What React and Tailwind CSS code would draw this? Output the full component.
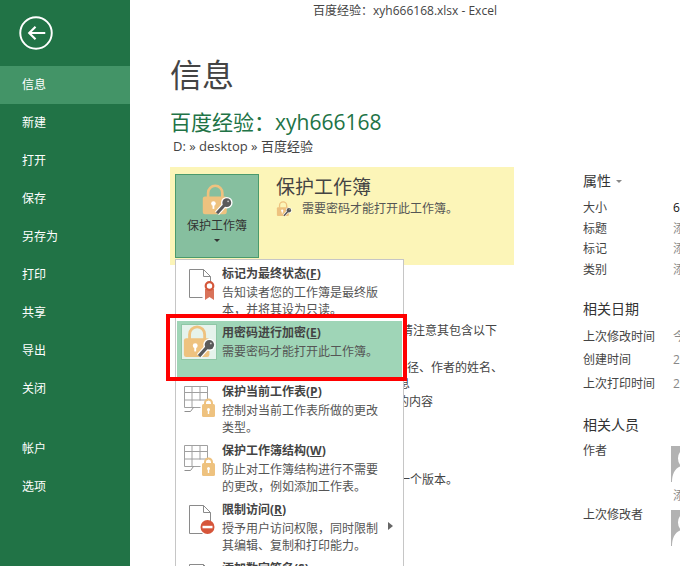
const fontStack = "font-['Open_Sans','Noto_Sans_CJK_SC',sans-serif]"

const navTop = ['信息', '新建', '打开', '保存', '另存为', '打印', '共享', '导出', '关闭']
const navBottom = ['帐户', '选项']

const LockKey = ({ className }) => (
  <svg viewBox="0 0 36 36" className={className}>
    <path d="M8 15V10a8 8 0 0 1 16 0v5" fill="none" stroke="#eec27f" strokeWidth="3" />
    <rect x="2" y="14" width="27" height="20" rx="2.5" fill="#eec27f" />
    <circle cx="14" cy="22" r="2.6" fill="#fff" />
    <rect x="13" y="22" width="2" height="6" fill="#fff" />
    <path d="M18 33l9-10" fill="none" stroke="#fff" strokeWidth="6" />
    <circle cx="29" cy="21" r="6.500" fill="#fff" />
    <path d="M18 33l9-10" fill="none" stroke="#5a5a5a" strokeWidth="3.500" />
    <circle cx="29" cy="21" r="5" fill="#5a5a5a" />
    <circle cx="30.500" cy="19.500" r="1" fill="#ccc" />
  </svg>
)

const Doc = ({ children }) => (
  <svg viewBox="0 0 36 36" className="w-9 h-9">
    <path d="M5.500 1.500h14l7 7v11M26.500 8.500h-7v-7M5.500 1.500v28h13" fill="none" stroke="#8a8a8a" />
    {children}
  </svg>
)

const Ribbon = () => (
  <Doc>
    <path d="M21 21h9v11l-4.500-3-4.500 3z" fill="#d9735a" />
    <circle cx="25.500" cy="18" r="3.800" fill="#fff" stroke="#d4573a" strokeWidth="2.200" />
  </Doc>
)

const Blocked = () => (
  <Doc>
    <circle cx="23.500" cy="23" r="7" fill="#d6553a" />
    <rect x="18.500" y="21.800" width="10" height="2.500" fill="#fff" />
  </Doc>
)

const SheetLock = () => (
  <svg viewBox="0 0 36 36" className="w-9 h-9">
    <path d="M.5 .5h23v14M.5 .5v21h16M.5 6.500h23M.5 14h23M.5 21.500M8 .5v21M16 .5v14" fill="none" stroke="#a0a0a0" />
    <path d="M.5 25.500h6l3-4" fill="none" stroke="#8f8f8f" />
    <path d="M21 19v-2a3.500 3.500 0 0 1 7 0v2" fill="none" stroke="#eec27f" strokeWidth="2" />
    <rect x="18" y="18" width="13" height="13" rx="1.500" fill="#eec27f" />
    <circle cx="24.500" cy="23.500" r="1.500" fill="#fff" />
    <rect x="23.800" y="24" width="1.400" height="4" fill="#fff" />
  </svg>
)

const Avatar = () => (
  <svg viewBox="0 0 36 36" className="w-9 h-9 shrink-0">
    <rect width="36" height="36" fill="#b2b2b2" />
    <path d="M1 36c0-8 3-14 9-16a11 11 0 1 1 16 0c6 2 9 8 9 16z" fill="#fff" />
  </svg>
)

const MenuItem = ({ icon, title, hot, lines, active, arrow }) => (
  <div className={`relative flex h-[59px] shrink-0 pl-[7px] pt-[6px] ${active ? 'bg-[#9fd5b7]' : ''}`}>
    <div className="w-[38px] shrink-0">{icon}</div>
    <div className="-mt-[3px] text-[12px] leading-[17px] text-[#555] whitespace-nowrap">
      <div className="font-bold text-[#444] mb-[2px]">{title}(<span className="underline">{hot}</span>)</div>
      {lines.map((l) => <div key={l}>{l}</div>)}
    </div>
    {arrow && <div className="absolute right-[9px] top-[24px] w-0 h-0 border-y-[4px] border-y-transparent border-l-[5px] border-l-[#666]" />}
  </div>
)

const Prop = ({ label, value, dark, className = '' }) => (
  <div className={`flex text-[12px] leading-[17px] whitespace-nowrap ${className}`}>
    <div className="w-[90px] shrink-0 text-[#444]">{label}</div>
    <div className={dark ? 'text-[#111]' : 'text-[#888]'}>{value}</div>
  </div>
)

export default function App() {
  return (
    <div className={`flex w-[680px] h-[566px] overflow-hidden bg-white ${fontStack}`}>
      <aside className="w-[130px] shrink-0 bg-[#217346] text-white text-[12px]">
        <div className="h-[66px] pl-[19px] pt-[16px]">
          <svg viewBox="0 0 36 36" className="w-[35px] h-[35px]" fill="none" stroke="#fff">
            <circle cx="17.500" cy="17.500" r="16.200" strokeWidth="2" />
            <path d="M27 17.500H11M17 11l-6.500 6.500L17 24" strokeWidth="2.200" />
          </svg>
        </div>
        {navTop.map((n, i) => (
          <div key={n} className={`h-[38px] pl-[22px] flex items-center ${i === 0 ? 'bg-[#439467]' : ''}`}>{n}</div>
        ))}
        <div className="h-[22px]" />
        {navBottom.map((n) => (
          <div key={n} className="h-[38px] pl-[22px] flex items-center">{n}</div>
        ))}
      </aside>

      <main className="flex-1 min-w-0">
        <div className="h-[22px] text-center text-[12px] leading-[22px] text-[#444] whitespace-nowrap">百度经验：xyh666168.xlsx - Excel</div>
        <div className="flex">
          <div className="relative w-[344px] ml-[40px] shrink-0">
            <h1 className="mt-[31px] text-[32px] leading-[44px] text-[#444]">信息</h1>
            <div className="mt-[10px] text-[21px] leading-[30px] text-[#217346] whitespace-nowrap">百度经验：xyh666168</div>
            <div className="ml-[3px] text-[13px] leading-[18px] text-[#444] whitespace-nowrap">D: » desktop » 百度经验</div>

            <div className="flex mt-[12px] h-[98px] bg-[#fcf5b8] pl-[5px] pt-[7px]">
              <div className="flex flex-col items-center w-[84px] h-[84px] bg-[#86bf9f] border border-[#4a9a6c] pt-[9px]">
                <LockKey className="w-[32px] h-[32px]" />
                <div className="mt-[2px] text-[12px] leading-[16px] text-[#333] whitespace-nowrap">保护工作簿</div>
                <div className="mt-[5px] w-0 h-0 border-x-[3px] border-x-transparent border-t-[3px] border-t-[#333]" />
              </div>
              <div className="ml-[17px]">
                <div className="text-[19px] leading-[26px] text-[#444] whitespace-nowrap">保护工作簿</div>
                <div className="flex items-center text-[12px] leading-[16px] text-[#555] whitespace-nowrap mt-[1px]">
                  <LockKey className="w-[16px] h-[16px]" />
                  <span className="ml-[10px]">需要密码才能打开此工作簿。</span>
                </div>
              </div>
            </div>

            <div className="pl-[123px] text-[12px] leading-[17px] text-[#444] whitespace-nowrap">
              <div className="mt-[57px]">在发布此文件之前，请注意其包含以下</div>
              <div className="mt-[20px] ml-[6px]">文档属性、打印机路径、作者的姓名、</div>
              <div className="-mt-[1px] ml-[9px]">相关日期和其他信息</div>
              <div className="mt-px ml-[8px]">残障人士难以阅读的内容</div>
              <div className="mt-[61px] ml-[9px]">此工作簿没有任何一个版本。</div>
            </div>

            <div className="absolute left-[5px] top-[237px] w-[229px] h-[340px] bg-white border-x border-t border-[#c6c6c6] px-px pt-[2px] flex flex-col">
              <MenuItem icon={<Ribbon />} title="标记为最终状态" hot="F" lines={['告知读者您的工作簿是最终版', '本，并将其设为只读。']} />
              <MenuItem active icon={
                <div className="w-[36px] h-[36px] -mt-[3px] -ml-[3px] bg-[#e6f3ec] border border-[#8fc7a6] flex items-center justify-center">
                  <LockKey className="w-[34px] h-[34px]" />
                </div>
              } title="用密码进行加密" hot="E" lines={['需要密码才能打开此工作簿。']} />
              <MenuItem icon={<SheetLock />} title="保护当前工作表" hot="P" lines={['控制对当前工作表所做的更改', '类型。']} />
              <MenuItem icon={<SheetLock />} title="保护工作簿结构" hot="W" lines={['防止对工作簿结构进行不需要', '的更改，例如添加工作表。']} />
              <MenuItem arrow icon={<Blocked />} title="限制访问" hot="R" lines={['授予用户访问权限，同时限制', '其编辑、复制和打印能力。']} />
              <MenuItem icon={<Doc />} title="添加数字签名" hot="S" lines={[]} />
            </div>

            <div className="absolute left-[-4px] top-[292px] w-[241px] h-[67px] border-4 border-[#f00] pointer-events-none" />
          </div>

          <div className="ml-[69px] shrink-0 w-[200px]">
            <div className="mt-[150px] flex items-center text-[14px] leading-[18px] text-[#333]">
              属性
              <span className="ml-[5px] w-0 h-0 border-x-[3px] border-x-transparent border-t-[3px] border-t-[#888]" />
            </div>
            <Prop className="mt-[9px]" label="大小" value="6.75KB" dark />
            <Prop className="mt-[4px]" label="标题" value="添加标题" />
            <Prop className="mt-[3px]" label="标记" value="添加标记" />
            <Prop className="mt-[4px]" label="类别" value="添加类别" />
            <div className="mt-[21px] text-[14px] leading-[20px] text-[#333]">相关日期</div>
            <Prop className="mt-[9px]" label="上次修改时间" value="今天" />
            <Prop className="mt-[6px]" label="创建时间" value="2015/1/1" />
            <Prop className="mt-[7px]" label="上次打印时间" value="2015/1/1" />
            <div className="mt-[23px] text-[14px] leading-[20px] text-[#333]">相关人员</div>
            <div className="flex mt-[11px] text-[12px] leading-[17px] text-[#444]">
              <div className="w-[88px] shrink-0 -mt-[4px]">作者</div>
              <Avatar />
            </div>
            <div className="ml-[90px] mt-[5px] text-[12px] leading-[17px] text-[#888] whitespace-nowrap">添加作者</div>
            <div className="flex mt-[6px] text-[12px] leading-[17px] text-[#444]">
              <div className="w-[88px] shrink-0 -mt-[4px]">上次修改者</div>
              <Avatar />
            </div>
          </div>
        </div>
      </main>
    </div>
  )
}
